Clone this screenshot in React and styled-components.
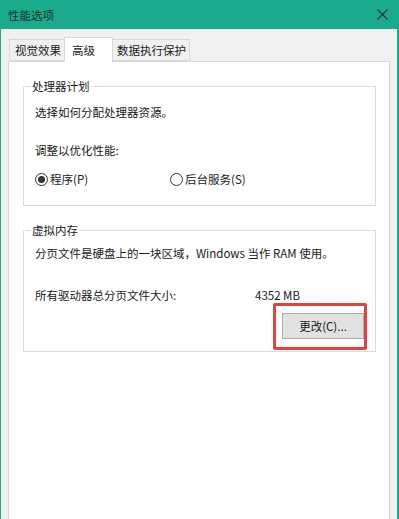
import React from "react";
import styled, { createGlobalStyle } from "styled-components";

const Global = createGlobalStyle`
  html, body { margin: 0; padding: 0; background: #ffffff; }
  body {
    font-family: "Noto Sans CJK SC", "Noto Sans", sans-serif;
    font-size: 11.5px;
    color: #1a1a1a;
  }
  * { box-sizing: border-box; }
`;

const Window = styled.div`
  width: 399px;
  height: 519px;
  overflow: hidden;
  display: flex;
  flex-direction: column;
  background: #f0f0f0;
  border-left: 1px solid #1aaa8c;
  border-right: 2px solid #1aaa8c;
`;

const TitleBar = styled.div`
  height: 29px;
  flex: none;
  background: #1aaa8c;
  display: flex;
  align-items: center;
  justify-content: space-between;
  padding: 0 9px 0 7px;
`;

const Title = styled.span`
  color: #14332b;
  font-size: 11.5px;
  line-height: 14px;
`;

const CloseIcon = styled.svg`
  width: 11px;
  height: 11px;
  display: block;
`;

const Body = styled.div`
  flex: 1;
  display: flex;
  flex-direction: column;
  padding: 8px 7px 0 7px;
  min-height: 0;
`;

const TabStrip = styled.div`
  display: flex;
  align-items: flex-end;
  height: 24px;
  padding-left: 1px;
  position: relative;
  z-index: 1;
`;

const Tab = styled.div`
  width: ${(p) => p.$w}px;
  height: ${(p) => (p.$active ? 25 : 22)}px;
  margin-bottom: ${(p) => (p.$active ? -1 : 0)}px;
  margin-left: ${(p) => (p.$first ? 0 : -1)}px;
  padding-left: ${(p) => p.$pl}px;
  display: flex;
  align-items: center;
  background: ${(p) => (p.$active ? "#ffffff" : "#f0f0f0")};
  border: 1px solid #d9d9d9;
  border-bottom: ${(p) => (p.$active ? "none" : "1px solid #d9d9d9")};
  position: relative;
  z-index: ${(p) => (p.$active ? 2 : 1)};
  line-height: 14px;
  white-space: nowrap;
`;

const Panel = styled.div`
  flex: 1;
  background: #ffffff;
  border: 1px solid #d9d9d9;
  border-bottom: none;
  padding: 17px 13px 0 14px;
`;

const Group = styled.fieldset`
  margin: ${(p) => p.$mt || 0}px 0 0 0;
  padding: 0;
  min-width: 0;
  border: 1px solid #dcdcdc;
`;

const Legend = styled.legend`
  margin-left: 7px;
  padding: 0 1px;
  line-height: 14px;
  height: 14px;
`;

const GroupBody = styled.div`
  padding: ${(p) => p.$pt}px 0 ${(p) => p.$pb}px 11px;
  display: flex;
  flex-direction: column;
`;

const Line = styled.div`
  line-height: 16px;
  margin-top: ${(p) => p.$mt || 0}px;
  white-space: nowrap;
`;

const RadioRow = styled.div`
  display: grid;
  grid-template-columns: 135px auto;
  margin-top: ${(p) => p.$mt || 0}px;
  line-height: 16px;
`;

const RadioLabel = styled.label`
  display: flex;
  align-items: center;
  gap: 2px;
  white-space: nowrap;
`;

const RadioCircle = styled.span`
  width: 13px;
  height: 13px;
  border-radius: 50%;
  border: 1px solid #333333;
  background: #ffffff;
  display: flex;
  align-items: center;
  justify-content: center;
  flex: none;
  &::after {
    content: "";
    width: 7px;
    height: 7px;
    border-radius: 50%;
    background: ${(p) => (p.$checked ? "#333333" : "transparent")};
  }
`;

const ValueRow = styled.div`
  display: grid;
  grid-template-columns: 220px auto;
  line-height: 16px;
  margin-top: ${(p) => p.$mt || 0}px;
  white-space: nowrap;
`;

const ButtonRow = styled.div`
  display: flex;
  justify-content: flex-end;
  margin-top: ${(p) => p.$mt || 0}px;
  padding-right: 11px;
`;

const Highlight = styled.div`
  position: relative;
  &::after {
    content: "";
    position: absolute;
    left: -9px;
    right: -3px;
    top: -10px;
    bottom: -11px;
    border: 3px solid #e2433f;
    border-radius: 2px;
    pointer-events: none;
  }
`;

const Button = styled.button`
  width: 82px;
  height: 26px;
  background: #e1e1e1;
  border: 1px solid #adadad;
  font: inherit;
  color: #1a1a1a;
  line-height: 14px;
  padding: 0;
  display: flex;
  align-items: center;
  justify-content: center;
`;

const Radio = ({ checked, children }) => (
  <RadioLabel>
    <RadioCircle $checked={checked} />
    <span>{children}</span>
  </RadioLabel>
);

export default function App() {
  return (
    <>
      <Global />
      <Window>
        <TitleBar>
          <Title>性能选项</Title>
          <CloseIcon viewBox="0 0 11 11">
            <path d="M0.5 0.5 L10.5 10.5 M10.5 0.5 L0.5 10.5" stroke="#1b3a32" strokeWidth="1.1" fill="none" />
          </CloseIcon>
        </TitleBar>
        <Body>
          <TabStrip>
            <Tab $first $w={56} $pl={5}>视觉效果</Tab>
            <Tab $active $w={49} $pl={7}>高级</Tab>
            <Tab $w={78} $pl={4}>数据执行保护</Tab>
          </TabStrip>
          <Panel>
            <Group>
              <Legend>处理器计划</Legend>
              <GroupBody $pt={11} $pb={18}>
                <Line>选择如何分配处理器资源。</Line>
                <Line $mt={22}>调整以优化性能:</Line>
                <RadioRow $mt={13}>
                  <Radio checked>程序(P)</Radio>
                  <Radio>后台服务(S)</Radio>
                </RadioRow>
              </GroupBody>
            </Group>
            <Group $mt={17}>
              <Legend>虚拟内存</Legend>
              <GroupBody $pt={8} $pb={12}>
                <Line>分页文件是硬盘上的一块区域，Windows 当作 RAM 使用。</Line>
                <ValueRow $mt={26}>
                  <span>所有驱动器总分页文件大小:</span>
                  <span>4352 MB</span>
                </ValueRow>
                <ButtonRow $mt={10}>
                  <Highlight>
                    <Button>更改(C)...</Button>
                  </Highlight>
                </ButtonRow>
              </GroupBody>
            </Group>
          </Panel>
        </Body>
      </Window>
    </>
  );
}
